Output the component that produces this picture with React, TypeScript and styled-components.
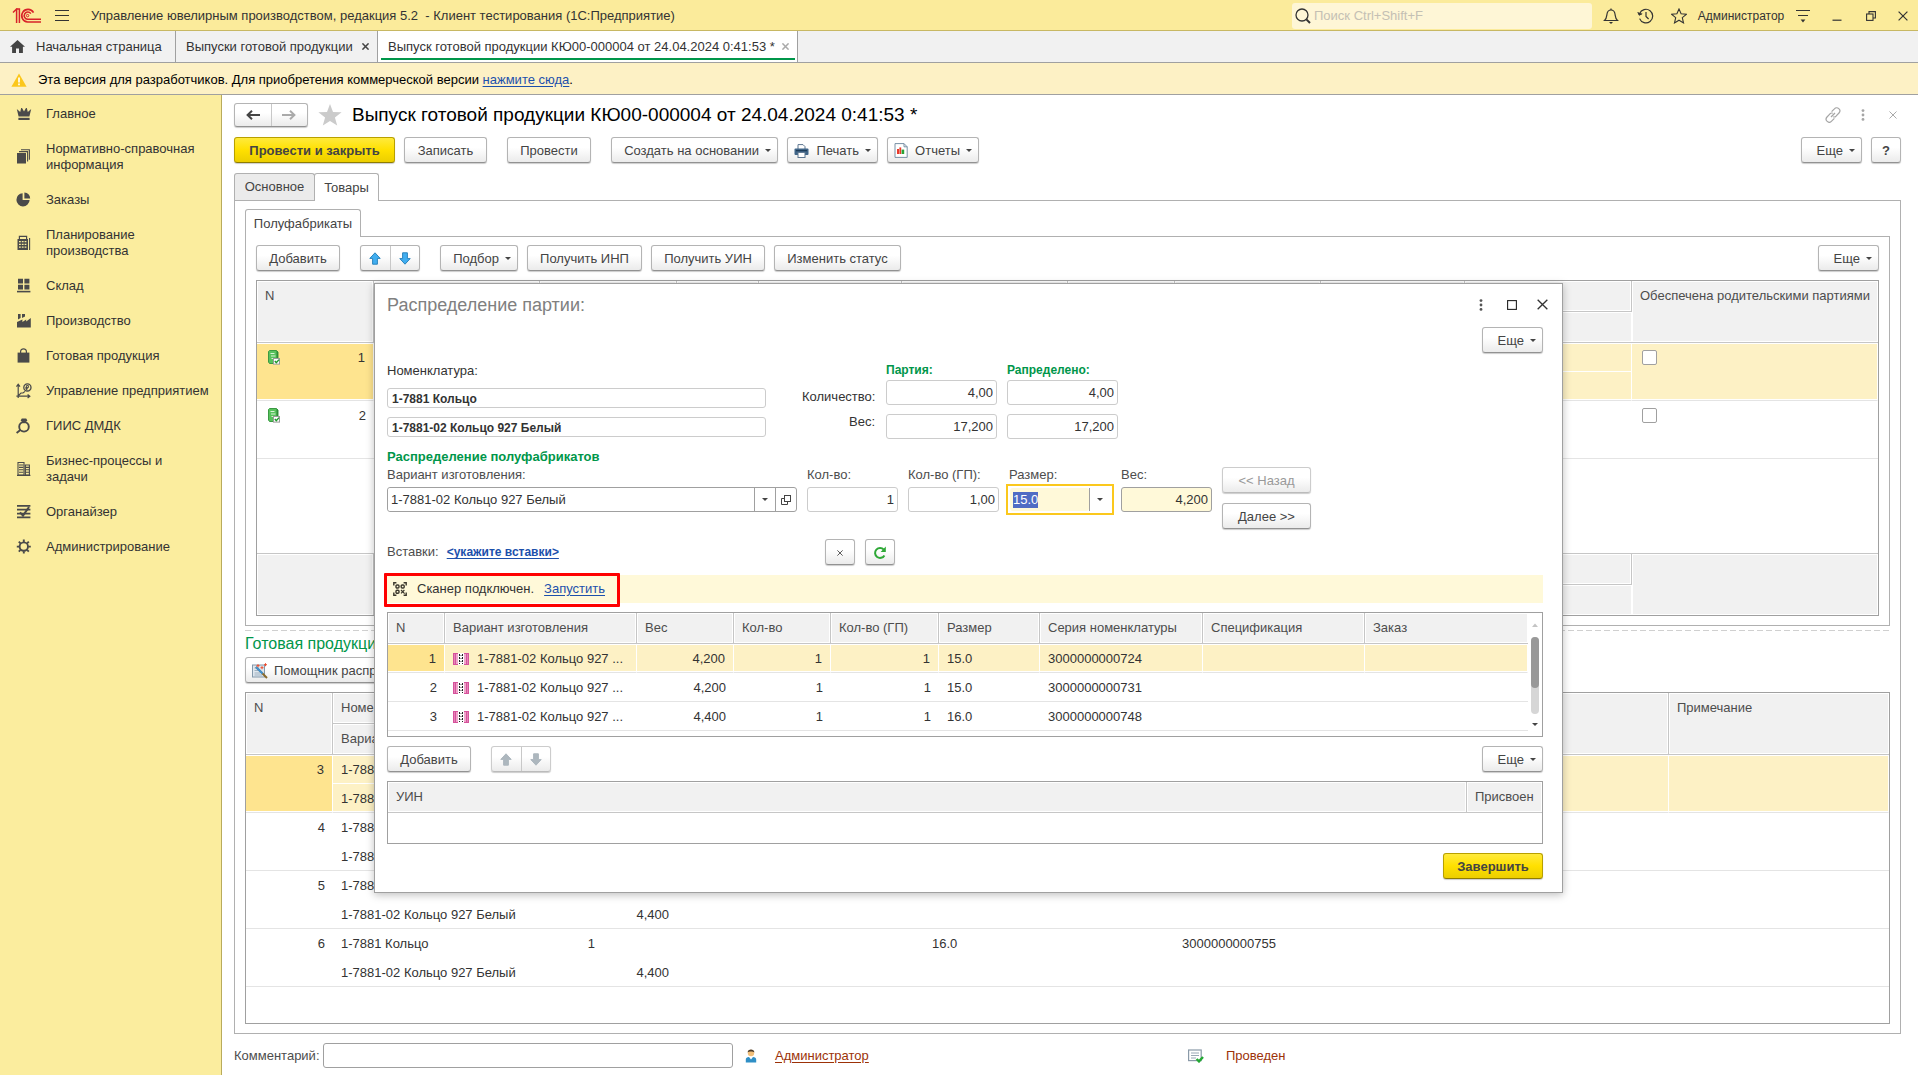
import React, { useEffect, useRef } from "react";
import styled, { createGlobalStyle, css } from "styled-components";

const GlobalStyle = createGlobalStyle`
  *, *::before, *::after { box-sizing: border-box; }
  body {
    margin: 0;
    background: #fff;
    color: #333;
    font-family: "Liberation Sans", Arial, sans-serif;
    font-size: 13px;
    line-height: 16px;
  }
  button, input { font-family: inherit; font-size: inherit; line-height: inherit; color: inherit; }
  button { cursor: pointer; }
  svg { display: block; flex: none; }
`;

/* ---------- Icons ---------- */

const LogoIcon = () => (
  <svg width="30" height="16" viewBox="0 0 30 16" fill="none" stroke="#d8232a">
    <path d="M1 4.5 L4.6 1 V15" strokeWidth="1.5" />
    <path d="M7.4 15 V1 H5" strokeWidth="1.5" />
    <path d="M21.5 4.6 A6.3 6.3 0 1 0 15.6 14 H29" strokeWidth="1.6" />
    <path d="M18.8 5.6 A3.6 3.6 0 1 0 15.6 11.2 H29" strokeWidth="1.5" />
    <circle cx="15.6" cy="7.6" r="1.2" strokeWidth="1" />
  </svg>
);

const BurgerIcon = () => (
  <svg width="14" height="12" viewBox="0 0 14 12" stroke="#333" strokeWidth="1">
    <path d="M0 0.5H14M0 5.5H14M0 10.5H14" />
  </svg>
);

const SearchIcon = () => (
  <svg width="16" height="16" viewBox="0 0 16 16" fill="none" stroke="#333" strokeWidth="1.3">
    <circle cx="7" cy="7" r="6" />
    <path d="M11.4 11.4 L15 15" strokeWidth="2" />
  </svg>
);

const BellIcon = () => (
  <svg width="16" height="16" viewBox="0 0 16 16" fill="none" stroke="#333" strokeWidth="1.2">
    <path d="M1.5 12.5 C3.6 10.8 3.6 8.5 4 6 C4.4 3.4 6 2 8 2 C10 2 11.6 3.4 12 6 C12.4 8.5 12.4 10.8 14.5 12.5 Z" />
    <path d="M8 0.5 V2" />
    <path d="M6 14 H10 L8 16 Z" fill="#333" stroke="none" />
  </svg>
);

const HistoryIcon = () => (
  <svg width="17" height="16" viewBox="0 0 17 16" fill="none" stroke="#333" strokeWidth="1.2">
    <path d="M2.6 5.6 A6.8 6.8 0 1 1 2.6 10.6" />
    <path d="M0.8 4.2 L2.2 7.2 L5.2 5.8" fill="#333" strokeWidth="1" />
    <path d="M9 4 V8.4 L11.6 11" />
  </svg>
);

const StarLineIcon = () => (
  <svg width="16" height="16" viewBox="0 0 16 16" fill="none" stroke="#333" strokeWidth="1.1">
    <path d="M8 1 L10.1 5.8 L15.3 6.3 L11.3 9.7 L12.5 14.9 L8 12.2 L3.5 14.9 L4.7 9.7 L0.7 6.3 L5.9 5.8 Z" />
  </svg>
);

const MenuDownIcon = () => (
  <svg width="14" height="14" viewBox="0 0 14 14" stroke="#333" strokeWidth="1.2">
    <path d="M0 1.5H14M2 6.5H12" />
    <path d="M4.6 10.5 H9.4 L7 13.4 Z" fill="#333" stroke="none" />
  </svg>
);

const MinimizeIcon = () => (
  <svg width="10" height="10" viewBox="0 0 10 10" stroke="#333">
    <path d="M0.5 9.2H9.5" strokeWidth="1.2" />
  </svg>
);

const RestoreIcon = () => (
  <svg width="10" height="10" viewBox="0 0 10 10" fill="none" stroke="#333" strokeWidth="1.1">
    <rect x="0.6" y="3" width="6.4" height="6.4" />
    <path d="M3 3 V0.6 H9.4 V7 H7" />
  </svg>
);

const CrossIcon = ({ size = 10, color = "#333", weight = 1.2 }: { size?: number; color?: string; weight?: number }) => (
  <svg width={size} height={size} viewBox="0 0 10 10" stroke={color} strokeWidth={weight}>
    <path d="M0.6 0.6 L9.4 9.4 M9.4 0.6 L0.6 9.4" />
  </svg>
);

const HomeIcon = () => (
  <svg width="15" height="13" viewBox="0 0 15 13" fill="#444">
    <path d="M7.5 0 L15 6.8 H12.9 V13 H9 V8.6 H6 V13 H2.1 V6.8 H0 Z" />
  </svg>
);

const WarningIcon = () => (
  <svg width="16" height="14" viewBox="0 0 16 14">
    <path d="M8 0.4 L15.6 13.8 H0.4 Z" fill="#fbc71c" />
    <path d="M8 4.4 V9.4 M8 10.6 V12.3" stroke="#fff" strokeWidth="1.7" />
  </svg>
);

const Arrow = ({ dir, color }: { dir: "left" | "right"; color: string }) => (
  <svg width="14" height="10" viewBox="0 0 14 10" fill="none" stroke={color} strokeWidth="2">
    {dir === "left" ? <path d="M14 5H2M6 0.8L1.6 5L6 9.2" /> : <path d="M0 5H12M8 0.8L12.4 5L8 9.2" />}
  </svg>
);

const BlockArrow = ({ dir, fill, line }: { dir: "up" | "down"; fill: string; line: string }) => (
  <svg width="12" height="13" viewBox="0 0 12 13" fill={fill} stroke={line} strokeWidth="1">
    {dir === "up" ? (
      <path d="M6 0.8 L11.2 6.4 H8.4 V12.2 H3.6 V6.4 H0.8 Z" />
    ) : (
      <path d="M6 12.2 L11.2 6.6 H8.4 V0.8 H3.6 V6.6 H0.8 Z" />
    )}
  </svg>
);

const FavoriteIcon = () => (
  <svg width="24" height="22" viewBox="0 0 24 22" fill="#cbcbcb">
    <path d="M12 0 L15 7.9 L23.6 8.3 L16.9 13.5 L19.2 21.6 L12 17 L4.8 21.6 L7.1 13.5 L0.4 8.3 L9 7.9 Z" />
  </svg>
);

const LinkIcon = () => (
  <svg width="16" height="16" viewBox="0 0 16 16" fill="none" stroke="#a5a5a5" strokeWidth="1.2">
    <path d="M6.6 4.6 L9.4 1.8 A2.9 2.9 0 0 1 14 6 L11 9.2 A2.7 2.7 0 0 1 8.2 9.8" />
    <path d="M9.4 11.4 L6.6 14.2 A2.9 2.9 0 0 1 2 10 L5 6.8 A2.7 2.7 0 0 1 7.8 6.2" />
    <path d="M6 10 L10 6" />
  </svg>
);

const KebabIcon = ({ color }: { color: string }) => (
  <svg width="4" height="12" viewBox="0 0 4 12" fill={color}>
    <circle cx="2" cy="1.6" r="1.4" />
    <circle cx="2" cy="6" r="1.4" />
    <circle cx="2" cy="10.4" r="1.4" />
  </svg>
);

const SquareIcon = () => (
  <svg width="10" height="10" viewBox="0 0 10 10" fill="none" stroke="#222" strokeWidth="1.1">
    <rect x="0.6" y="0.6" width="8.8" height="8.8" />
  </svg>
);

const Caret = ({ color = "#444" }: { color?: string }) => (
  <svg width="6" height="3" viewBox="0 0 6 3" fill={color}>
    <path d="M0 0H6L3 3Z" />
  </svg>
);

const PrinterIcon = () => (
  <svg width="15" height="14" viewBox="0 0 15 14">
    <path d="M4 5 V0.6 H9 L11 2.6 V5" fill="#fff" stroke="#5d7690" />
    <rect x="0.5" y="4.6" width="14" height="6.4" rx="1" fill="#3f6487" />
    <rect x="2" y="6.2" width="11" height="1" fill="#16344f" />
    <rect x="4" y="8.4" width="7" height="5.1" fill="#fff" stroke="#5d7690" />
  </svg>
);

const ReportIcon = () => (
  <svg width="14" height="15" viewBox="0 0 14 15">
    <path d="M1 0.6 H10 L13.2 3.8 V14.4 H1 Z" fill="#fff" stroke="#7890a5" />
    <path d="M10 0.6 V3.8 H13.2" fill="none" stroke="#7890a5" />
    <rect x="3" y="6" width="2" height="5" fill="#e83a2c" />
    <rect x="5.4" y="4.4" width="1.8" height="6.6" fill="#e83a2c" />
    <rect x="7.6" y="6.6" width="2.6" height="4.4" fill="#2aa336" />
  </svg>
);

const WizardIcon = () => (
  <svg width="16" height="16" viewBox="0 0 16 16">
    <rect x="0.5" y="2" width="12" height="12" fill="#dfe7ee" stroke="#8398aa" />
    <path d="M2.5 5H7M2.5 7.5H6M2.5 10H8M2.5 12H10" stroke="#9fb1c1" />
    <path d="M4 4 L15 15" stroke="#8a6a2b" strokeWidth="2" />
    <path d="M4 4 L10.5 10.5" stroke="#3f93d6" strokeWidth="2" />
    <path d="M6 1.2V4.2M4.5 2.7H7.5M10 3.2V6.2M8.5 4.7H11.5M13.5 0.2V3.2M12 1.7H15" stroke="#ef4a2c" />
  </svg>
);

const ItemIcon = () => (
  <svg width="13" height="15" viewBox="0 0 13 15">
    <path d="M1.5 0.5 H8.5 L10 2 V13.5 H1.5 L0.5 12 V1.5 Z" fill="#58c25d" stroke="#3b9a42" />
    <path d="M8.5 0.5 L10 2 V13.5 L8.5 12 Z" fill="#2f8a38" />
    <path d="M2.5 3.5 H6.5 M3 6 H7.5 M3.5 8.5 H6" stroke="#d8f4d5" />
    <rect x="5.5" y="8.5" width="6" height="5.6" fill="#fff" stroke="#9a9a9a" />
    <path d="M6.8 11 L8.3 12.6 L11 9.6" fill="none" stroke="#1d9a2b" strokeWidth="1.4" />
  </svg>
);

const RingIcon = () => (
  <svg width="16" height="12" viewBox="0 0 16 12">
    <rect width="16" height="12" fill="#d6529b" />
    <rect x="3" y="1" width="10" height="10" fill="#efa6cb" />
    <path d="M1.5 1.5V10.5M14.5 1.5V10.5" stroke="#f3b9d7" strokeDasharray="1 1" />
    <rect x="5" y="0" width="6" height="12" fill="#fff" />
    <path d="M6.5 1V11M9.5 1V11" stroke="#222" strokeDasharray="2 1" />
    <path d="M8 2V11" stroke="#444" strokeDasharray="1 2" />
  </svg>
);

const OpenIcon = () => (
  <svg width="10" height="10" viewBox="0 0 10 10" fill="none" stroke="#444">
    <rect x="3.5" y="0.5" width="6" height="6" />
    <path d="M3.5 3.5 H0.5 V9.5 H6.5 V6.5" />
  </svg>
);

const RefreshIcon = () => (
  <svg width="14" height="14" viewBox="0 0 14 14">
    <path d="M11.4 9.4 A5 5 0 1 1 10.8 3.6" fill="none" stroke="#2ea836" strokeWidth="2" />
    <path d="M12.8 0.6 V6 H7.6 Z" fill="#2ea836" />
  </svg>
);

const QrIcon = () => (
  <svg width="14" height="14" viewBox="0 0 14 14" fill="none" stroke="#3b372c" strokeWidth="1.4">
    <path d="M0.8 3.4V0.8H3.4M10.6 0.8H13.2V3.4M13.2 10.6V13.2H10.6M3.4 13.2H0.8V10.6" />
    <rect x="3" y="3" width="3" height="3" rx="1" />
    <rect x="8.2" y="3" width="3" height="3" rx="1" />
    <rect x="3" y="8.2" width="3" height="3" rx="1" />
    <path d="M8 8L11.6 11.6M11.4 8L8 11.4" strokeWidth="1.2" />
  </svg>
);

const PersonIcon = () => (
  <svg width="12" height="14" viewBox="0 0 12 14">
    <circle cx="6" cy="4" r="3.2" fill="#f2bf7a" />
    <path d="M2.6 3.6 C2.6 -0.6 9.4 -0.6 9.4 3.6 C8 2.2 4 2.2 2.6 3.6 Z" fill="#4a3b2a" />
    <path d="M0.8 13.6 V10.6 C0.8 9 2 8 4 8 L6 10.4 L8 8 C10 8 11.2 9 11.2 10.6 V13.6 Z" fill="#2f8fc6" />
  </svg>
);

const PostedIcon = () => (
  <svg width="16" height="14" viewBox="0 0 16 14">
    <rect x="0.6" y="1" width="12.6" height="10.6" fill="#fff" stroke="#8a9aa8" strokeWidth="1.2" />
    <path d="M3 4H11M3 6.5H11M3 9H8" stroke="#9aa8b5" strokeWidth="1.2" />
    <path d="M8.6 10 L11 12.4 L15 8" fill="none" stroke="#23a833" strokeWidth="2.4" />
  </svg>
);

const glyphs: Record<string, React.ReactNode> = {
  crown: (
    <>
      <path d="M0.8 3 L4.2 6 L5.2 2 H6 L8 5.4 L10 2 H10.8 L11.8 6 L15.2 3 L13.4 10.6 H2.6 Z" />
      <rect x="2.4" y="11.8" width="11.2" height="2.2" />
    </>
  ),
  books: (
    <>
      <rect x="1" y="4" width="9" height="10.5" />
      <path d="M3 2.6H11.6V12.6M5 0.8H13.4V10.8" fill="none" stroke="#4a4a4a" strokeWidth="1.1" />
    </>
  ),
  pie: (
    <>
      <path d="M6.6 1.2 V8 H13.6 A6.6 6.6 0 1 1 6.6 1.2 Z" />
      <path d="M8.4 0.6 A6.4 6.4 0 0 1 14.2 6.4 H8.4 Z" />
    </>
  ),
  calc: (
    <>
      <path d="M3.4 5V1.4H10.6V5" fill="none" stroke="#4a4a4a" strokeWidth="1.2" />
      <rect x="1.5" y="4" width="10.5" height="11" />
      <path d="M3 6.6H10.6M3 9.4H10.6M3 12.2H10.6" stroke="#fbed9e" strokeWidth="1.3" strokeDasharray="1.8 1" />
      <path d="M13.6 3V15" stroke="#4a4a4a" strokeWidth="1.1" />
    </>
  ),
  boxes: (
    <>
      <path d="M2 0.8H7V5.6H2ZM8.4 0.8H13.4V5.6H8.4ZM2 6.8H7V11.6H2ZM8.4 6.8H13.4V11.6H8.4Z" />
      <rect x="1" y="12.8" width="13.4" height="1.6" />
    </>
  ),
  factory: <path d="M1 14.5V9L6.4 6.4V9L10.2 6.4V8.4L14.8 5V14.5ZM2 1H4.6V5L2 6.4ZM6 1H9V3.4L6 5Z" />,
  bag: (
    <>
      <path d="M1.6 4.6H13.4V14.6H1.6Z" />
      <path d="M4.6 6.5V3.6C4.6 0 10.4 0 10.4 3.6V6.5" fill="none" stroke="#4a4a4a" strokeWidth="1.2" />
    </>
  ),
  chart: (
    <>
      <path d="M2.2 15V2M0.4 3.6L2.2 1.2L4 3.6M0.4 13.2H13.6M11.6 11.6L13.8 13.2L11.6 15M2.4 12.6L5 10H7L9 8.4" fill="none" stroke="#4a4a4a" strokeWidth="1.2" />
      <circle cx="11.4" cy="4.4" r="3.6" fill="none" stroke="#4a4a4a" strokeWidth="1.3" />
      <path d="M10.4 7V2.6H12.4V4.6H9.4M9.4 5.8H12" stroke="#4a4a4a" fill="none" strokeWidth="1" />
    </>
  ),
  ring: (
    <>
      <circle cx="8" cy="8.8" r="4.8" fill="none" stroke="#4a4a4a" strokeWidth="1.9" />
      <path d="M5.8 0.4H10.2L11.4 2.4L8 5.6L4.6 2.4Z" />
      <path d="M0.6 15L4.6 11.8" stroke="#4a4a4a" strokeWidth="1.9" />
    </>
  ),
  building: (
    <>
      <path d="M2 1.5H8V14H2ZM9.4 4H13.4V14H9.4Z" fill="none" stroke="#4a4a4a" strokeWidth="1.1" />
      <path d="M3 4H7.4M3 6.4H7.4M3 8.8H7.4M3 11.2H7.4M10 6.4H13M10 8.8H13M10 11.2H13" stroke="#4a4a4a" strokeWidth="1.1" />
      <path d="M1 14.4H14.4" stroke="#4a4a4a" strokeWidth="1.2" />
    </>
  ),
  organizer: (
    <>
      <path d="M1 1.8H14.4M1 5.6H14.4M1 9.6H14.4M1 13.4H14.4" stroke="#4a4a4a" strokeWidth="1.7" />
      <path d="M4 8.4L7 11.6L13 3" fill="none" stroke="#4a4a4a" strokeWidth="2" />
    </>
  ),
  gear: (
    <>
      <circle cx="7.8" cy="7.6" r="4.2" fill="none" stroke="#4a4a4a" strokeWidth="1.9" />
      <path d="M7.8 0.6V3M7.8 12.2V14.6M0.8 7.6H3.2M12.4 7.6H14.8M2.8 2.6L4.5 4.3M11.1 10.9L12.8 12.6M12.8 2.6L11.1 4.3M4.5 10.9L2.8 12.6" stroke="#4a4a4a" strokeWidth="1.9" />
    </>
  ),
};

const SideIcon = ({ name }: { name: string }) => (
  <svg width="16" height="16" viewBox="0 0 16 16" fill="#4a4a4a">
    {glyphs[name]}
  </svg>
);

/* ---------- Shell ---------- */

const Page = styled.div`
  min-height: 100vh;
  display: flex;
  flex-direction: column;
  position: relative;
`;

const TopBar = styled.header`
  height: 31px;
  display: flex;
  align-items: center;
  padding: 1px 0 0 12px;
  background: #fbeb9b;
  border-bottom: 1px solid #c8b863;
`;

const AppTitle = styled.div`
  margin-left: 9px;
  flex: 1;
  white-space: pre;
`;

const BarButton = styled.button<{ $w?: number }>`
  width: ${(p) => p.$w ?? 34}px;
  height: 24px;
  padding: 0;
  border: 0;
  background: none;
  display: flex;
  align-items: center;
  justify-content: center;
`;

const SearchBox = styled.label`
  width: 300px;
  height: 26px;
  margin-right: 2px;
  padding-left: 3px;
  display: flex;
  align-items: center;
  gap: 3px;
  border-radius: 3px;
  background: #fef6d6;
`;

const SearchInput = styled.input`
  flex: 1;
  min-width: 0;
  border: 0;
  padding: 0;
  background: none;
  outline: none;
  &::placeholder { color: #c4c0b4; opacity: 1; }
`;

const UserName = styled.span`
  font-size: 12px;
  width: 90px;
  text-align: center;
`;

const TabStrip = styled.nav`
  height: 32px;
  display: flex;
  background: #f1f1f1;
  border-bottom: 1px solid #a0a0a0;
`;

const AppTab = styled.div<{ $active?: boolean; $w: number }>`
  width: ${(p) => p.$w}px;
  padding: 0 8px 0 10px;
  display: flex;
  align-items: center;
  border-right: 1px solid #a0a0a0;
  white-space: nowrap;
  ${(p) =>
    p.$active &&
    css`
      background: linear-gradient(#00964a, #00964a) 3px 27px / calc(100% - 5px) 2px no-repeat #fff;
    `}
`;

const TabLabel = styled.button`
  flex: 1;
  display: flex;
  align-items: center;
  gap: 11px;
  padding: 0;
  border: 0;
  background: none;
  white-space: nowrap;
`;

const TabClose = styled.button`
  padding: 0;
  border: 0;
  background: none;
`;

const Banner = styled.div`
  height: 32px;
  display: flex;
  align-items: center;
  gap: 11px;
  padding: 2px 0 0 11px;
  background: #fdf1c5;
  border-bottom: 1px solid #a0a0a0;
  color: #000;
`;

const Link = styled.a<{ $strong?: boolean; $brown?: boolean }>`
  color: ${(p) => (p.$brown ? "#9c3208" : "#1c50ac")};
  font-weight: ${(p) => (p.$strong ? "bold" : "normal")};
  font-size: ${(p) => (p.$strong ? 12 : 13)}px;
  text-decoration: underline;
  text-underline-offset: 2px;
`;

const Main = styled.div`
  flex: 1;
  display: flex;
`;

const Sidebar = styled.nav`
  width: 222px;
  flex: none;
  padding-top: 1px;
  background: #fbed9e;
  border-right: 1px solid #b9ab5c;
`;

const SideItem = styled.a`
  display: flex;
  align-items: center;
  gap: 14px;
  min-height: 35px;
  padding: 10px 8px 9px 16px;
  color: #333;
  text-decoration: none;
  white-space: pre-line;
`;

const Work = styled.main`
  flex: 1;
  min-width: 0;
  display: flex;
  flex-direction: column;
  padding: 8px 17px 7px 12px;
`;

/* ---------- Controls ---------- */

const Row = styled.div<{ $gap?: number; $mt?: number }>`
  display: flex;
  align-items: center;
  gap: ${(p) => p.$gap ?? 9}px;
  margin-top: ${(p) => p.$mt ?? 0}px;
`;

const Spacer = styled.div<{ $w?: number }>`
  ${(p) => (p.$w ? `width: ${p.$w}px;` : "flex: 1;")}
`;

const Button = styled.button<{ $w: number; $primary?: boolean; $left?: boolean }>`
  width: ${(p) => p.$w}px;
  height: 26px;
  flex: none;
  display: flex;
  align-items: center;
  justify-content: ${(p) => (p.$left ? "flex-start" : "center")};
  gap: 6px;
  padding: 1px 6px 0;
  border: 1px solid #b4b4b4;
  border-bottom-color: #929292;
  border-radius: 3px;
  background: linear-gradient(#fff 40%, #ebebeb);
  box-shadow: 0 1px 1px rgba(0, 0, 0, 0.2);
  color: #444;
  white-space: nowrap;
  ${(p) =>
    p.$primary &&
    css`
      border-color: #b8a000;
      border-bottom-color: #8f7c00;
      background: linear-gradient(#ffea3c, #ffe000 50%, #ecce00);
      font-weight: bold;
    `}
  &:disabled {
    color: #999;
    border-color: #ccc;
    border-bottom-color: #bbb;
    cursor: default;
  }
`;

const DropLabel = styled.span`
  flex: 1;
  text-align: right;
`;

const ButtonGroup = styled.div<{ $w: number; $muted?: boolean; $h?: number }>`
  width: ${(p) => p.$w}px;
  height: ${(p) => p.$h ?? 26}px;
  display: flex;
  border: 1px solid ${(p) => (p.$muted ? "#ccc" : "#b4b4b4")};
  border-bottom-color: ${(p) => (p.$muted ? "#bbb" : "#929292")};
  border-radius: 3px;
  background: linear-gradient(#fff 40%, #ebebeb);
  box-shadow: 0 1px 1px rgba(0, 0, 0, 0.2);
`;

const GroupButton = styled.button`
  flex: 1;
  padding: 0;
  border: 0;
  background: none;
  display: flex;
  align-items: center;
  justify-content: center;
  & + & { border-left: 1px solid #c8c8c8; }
`;

const FormTitle = styled.h1`
  margin: 0;
  flex: 1;
  font-size: 19px;
  line-height: 24px;
  font-weight: normal;
  color: #000;
`;

const Tabs = styled.div<{ $mt?: number }>`
  display: flex;
  height: 27px;
  margin-top: ${(p) => p.$mt ?? 0}px;
`;

const Tab = styled.button<{ $w: number; $active?: boolean }>`
  width: ${(p) => p.$w}px;
  height: ${(p) => (p.$active ? 28 : 27)}px;
  padding: 0;
  position: relative;
  border: 1px solid #b0b0b0;
  border-bottom: 0;
  border-radius: 3px 3px 0 0;
  background: ${(p) => (p.$active ? "#fff" : "#ebebeb")};
  color: #444;
  & + & { margin-left: -1px; }
`;

const Panel = styled.section<{ $grow?: boolean }>`
  ${(p) => p.$grow && "flex: 1;"}
  display: flex;
  flex-direction: column;
  padding: 8px 10px 9px;
  border: 1px solid #b0b0b0;
`;

const Splitter = styled.div`
  height: 1px;
  margin-top: 4px;
  background: repeating-linear-gradient(90deg, #d0d0d0 0 6px, transparent 6px 9px);
`;

const SectionTitle = styled.h2`
  margin: 0;
  font-size: 16px;
  line-height: 26px;
  font-weight: normal;
  color: #00964a;
`;

/* ---------- Tables ---------- */

const TableBox = styled.div<{ $h?: number }>`
  display: flex;
  margin-top: 9px;
  ${(p) => (p.$h ? `height: ${p.$h}px;` : "flex: 1 0 auto;")}
  border: 1px solid #a0a0a0;
  overflow: hidden;
  align-items: flex-start;
`;

const Grid = styled.table<{ $fill?: boolean }>`
  flex: 1;
  width: 100%;
  ${(p) => p.$fill && "height: 100%;"}
  table-layout: fixed;
  border-collapse: separate;
  border-spacing: 0;
`;

const Th = styled.th`
  height: 31px;
  padding: 0 8px;
  text-align: left;
  vertical-align: top;
  font-weight: normal;
  line-height: 30px;
  color: #4d4d4d;
  white-space: nowrap;
  overflow: hidden;
  background: #f1f1f1;
  border-right: 1px solid #c6c6c6;
  border-bottom: 1px solid #c6c6c6;
  box-shadow: inset 0 0 0 1px #fff;
  &:last-child { border-right: 0; }
`;

const Tf = styled.td`
  height: 31px;
  background: #f1f1f1;
  border-right: 1px solid #c6c6c6;
  border-top: 1px solid #c6c6c6;
  box-shadow: inset 0 0 0 1px #fff;
  &:last-child { border-right: 0; }
`;

const edges = {
  full: "inset 0 1px 0 #fff, inset 0 -1px 0 #fff",
  top: "inset 0 1px 0 #fff",
  bottom: "inset 0 -1px 0 #fff",
};

const Td = styled.td<{ $num?: boolean; $sel?: boolean; $key?: boolean; $part?: "top" | "bottom" }>`
  height: 29px;
  padding: 1px 8px 0;
  vertical-align: top;
  line-height: 27px;
  text-align: ${(p) => (p.$num ? "right" : "left")};
  white-space: nowrap;
  overflow: hidden;
  border-bottom: 1px solid ${(p) => (p.$part === "top" ? "#fff" : "#e4e4e4")};
  ${(p) =>
    p.$sel &&
    css`
      background: ${p.$key ? "#fee48f" : "#fdf1c5"};
      border-right: 1px solid #fff;
      box-shadow: ${edges[p.$part ?? "full"]};
    `}
`;

const FillCell = styled.td`
  padding: 0;
`;

const CellFlex = styled.div`
  display: flex;
  align-items: center;
  justify-content: space-between;
  height: 27px;
  padding-left: 3px;
`;

const Named = styled.div`
  display: flex;
  align-items: center;
  gap: 8px;
  height: 27px;
`;

const CheckBox = styled.input`
  appearance: none;
  display: block;
  width: 15px;
  height: 15px;
  margin: 6px 0 0 2px;
  border: 1px solid #a0a0a0;
  border-radius: 2px;
  background: #fff;
`;

const ScrollRail = styled.div`
  width: 14px;
  height: 100%;
  flex: none;
  display: flex;
  flex-direction: column;
  align-items: center;
  justify-content: space-between;
  padding: 10px 0;
`;

const ScrollTrack = styled.div`
  width: 8px;
  height: 77px;
  border-radius: 4px;
  background: #d6d6d6;
`;

const ScrollThumb = styled.div`
  height: 51px;
  border-radius: 4px;
  background: #999;
`;

/* ---------- Dialog ---------- */

const Dialog = styled.section`
  position: absolute;
  top: 283px;
  left: 374px;
  right: 355px;
  padding: 0 19px 13px 12px;
  background: #fff;
  border: 1px solid #a0a0a0;
  box-shadow: 0 2px 8px rgba(0, 0, 0, 0.25);
`;

const DialogHead = styled.div`
  height: 43px;
  margin-right: -15px;
  padding-bottom: 2px;
  display: flex;
  align-items: center;
`;

const DialogTitle = styled.h2`
  margin: 0;
  flex: 1;
  font-size: 18px;
  font-weight: normal;
  color: #808080;
`;

const End = styled.div<{ $mt?: number }>`
  display: flex;
  justify-content: flex-end;
  margin-top: ${(p) => p.$mt ?? 0}px;
`;

const Columns = styled.div<{ $mt: number }>`
  display: flex;
  align-items: flex-start;
  gap: 10px;
  margin-top: ${(p) => p.$mt}px;
`;

const NameColumn = styled.div`
  width: 379px;
  margin-right: 26px;
  padding-top: 1px;
  display: flex;
  flex-direction: column;
  gap: 9px;
`;

const NameInput = styled.input`
  width: 100%;
  height: 20px;
  padding: 1px 4px 0;
  border: 1px solid #ccc;
  border-radius: 3px;
  font-size: 12px;
  font-weight: bold;
`;

const SideLabels = styled.div`
  width: 73px;
  margin-right: 1px;
  padding-top: 22px;
  text-align: right;
  line-height: 25px;
`;

const Totals = styled.div`
  width: 111px;
  display: flex;
  flex-direction: column;
`;

const GreenLabel = styled.div<{ $size?: number; $mt?: number }>`
  margin-top: ${(p) => p.$mt ?? 0}px;
  font-size: ${(p) => p.$size ?? 12}px;
  font-weight: bold;
  color: #00964a;
  & + input { margin-top: 2px; }
`;

const NumberInput = styled.input<{ $hot?: boolean }>`
  width: 100%;
  height: 25px;
  padding: 0 3px;
  text-align: right;
  border: 1px solid ${(p) => (p.$hot ? "#a0a0a0" : "#ccc")};
  border-radius: 3px;
  background: ${(p) => (p.$hot ? "#fff9d9" : "#fff")};
  & + & { margin-top: 9px; }
`;

const Field = styled.div<{ $w: number }>`
  width: ${(p) => p.$w}px;
  display: flex;
  flex-direction: column;
  gap: 4px;
`;

const FieldLabel = styled.label`
  color: #4d4d4d;
  white-space: nowrap;
`;

const Combo = styled.div<{ $focus?: boolean }>`
  height: 25px;
  display: flex;
  border: 1px solid #a0a0a0;
  border-radius: 3px;
  ${(p) =>
    p.$focus &&
    css`
      border-color: #fff;
      box-shadow: 0 0 0 1px #fff, 0 0 0 3px #fbc81d;
      border-radius: 0;
    `}
`;

const ComboInput = styled.input<{ $hot?: boolean }>`
  flex: 1;
  min-width: 0;
  padding: 0 3px;
  border: 0;
  border-radius: 3px;
  outline: none;
  background: ${(p) => (p.$hot ? "#fff9d9" : "#fff")};
  &::selection { background: #506cc4; color: #fff; }
`;

const ComboButton = styled.button`
  width: 21px;
  padding: 0;
  border: 0;
  border-left: 1px solid #a0a0a0;
  background: none;
  display: flex;
  align-items: center;
  justify-content: center;
`;

const Stack = styled.div`
  display: flex;
  flex-direction: column;
  gap: 10px;
`;

const InsertCell = styled.div`
  width: 428px;
  display: flex;
  gap: 8px;
`;

const ScannerBar = styled.div`
  position: relative;
  height: 28px;
  margin-top: 10px;
  padding-left: 6px;
  display: flex;
  align-items: center;
  gap: 10px;
  background: #fff9d9;
`;

const RedFrame = styled.div`
  position: absolute;
  left: -3px;
  top: -2px;
  width: 236px;
  height: 34px;
  border: 3px solid #fe0000;
  border-radius: 1px;
  pointer-events: none;
`;

const Footer = styled.footer`
  display: flex;
  align-items: center;
  margin-top: 9px;
`;

const CommentInput = styled.input`
  width: 410px;
  height: 25px;
  margin: 0 12px 0 7px;
  border: 1px solid #a0a0a0;
  border-radius: 3px;
`;

const FooterLabel = styled.label`
  width: 82px;
  color: #4d4d4d;
  white-space: nowrap;
`;

const Author = styled.div`
  width: 443px;
  display: flex;
  align-items: center;
  gap: 18px;
`;

const Posted = styled.div`
  display: flex;
  align-items: center;
  gap: 22px;
  color: #9c3208;
`;

/* ---------- Data ---------- */

const sections: [string, string][] = [
  ["crown", "Главное"],
  ["books", "Нормативно-справочная информация"],
  ["pie", "Заказы"],
  ["calc", "Планирование производства"],
  ["boxes", "Склад"],
  ["factory", "Производство"],
  ["bag", "Готовая продукция"],
  ["chart", "Управление предприятием"],
  ["ring", "ГИИС ДМДК"],
  ["building", "Бизнес-процессы и\nзадачи"],
  ["organizer", "Органайзер"],
  ["gear", "Администрирование"],
];

const semiColumns = [166, 137, 82, 143, 166, 107, 146, 144, 167];

const parts = [
  { n: 1, weight: "4,200", size: "15.0", series: "3000000000724" },
  { n: 2, weight: "4,200", size: "15.0", series: "3000000000731" },
  { n: 3, weight: "4,400", size: "16.0", series: "3000000000748" },
];

const products = [
  { n: 3, weight: "4,200", size: "15.0", series: "3000000000724" },
  { n: 4, weight: "4,200", size: "15.0", series: "3000000000731" },
  { n: 5, weight: "4,400", size: "16.0", series: "3000000000748" },
  { n: 6, weight: "4,400", size: "16.0", series: "3000000000755" },
];

const MoreButton = () => (
  <Button $w={61}>
    <DropLabel>Еще</DropLabel>
    <Caret />
  </Button>
);

const SemiTable = () => (
  <TableBox $h={336}>
    <Grid $fill>
      <colgroup>
        <col style={{ width: 117 }} />
        {semiColumns.map((w, i) => (
          <col key={i} style={{ width: w }} />
        ))}
        <col />
      </colgroup>
      <thead>
        <tr>
          <Th rowSpan={2}>N</Th>
          {semiColumns.map((_, i) => (
            <Th key={i} />
          ))}
          <Th rowSpan={2}>Обеспечена родительскими партиями</Th>
        </tr>
        <tr>
          {semiColumns.map((_, i) => (
            <Th key={i} />
          ))}
        </tr>
      </thead>
      <tbody>
        {[1, 2].map((n) => (
          <React.Fragment key={n}>
            <tr>
              <Td rowSpan={2} $sel={n === 1} $key>
                <CellFlex>
                  <ItemIcon />
                  <span>{n}</span>
                </CellFlex>
              </Td>
              {semiColumns.map((_, i) => (
                <Td key={i} $sel={n === 1} $part="top" />
              ))}
              <Td rowSpan={2} $sel={n === 1}>
                <CheckBox type="checkbox" aria-label="Обеспечена родительскими партиями" />
              </Td>
            </tr>
            <tr>
              {semiColumns.map((_, i) => (
                <Td key={i} $sel={n === 1} $part="bottom" />
              ))}
            </tr>
          </React.Fragment>
        ))}
        <tr>
          <FillCell colSpan={11} />
        </tr>
      </tbody>
      <tfoot>
        <tr>
          <Tf rowSpan={2} />
          {semiColumns.map((_, i) => (
            <Tf key={i} />
          ))}
          <Tf rowSpan={2} />
        </tr>
        <tr>
          {semiColumns.map((_, i) => (
            <Tf key={i} />
          ))}
        </tr>
      </tfoot>
    </Grid>
  </TableBox>
);

const ProductTable = () => (
  <TableBox>
    <Grid>
      <colgroup>
        {[87, 246, 24, 74, 247, 250, 495].map((w, i) => (
          <col key={i} style={{ width: w }} />
        ))}
        <col />
      </colgroup>
      <thead>
        <tr>
          <Th rowSpan={2}>N</Th>
          <Th>Номенклатура</Th>
          <Th colSpan={2} />
          <Th rowSpan={2} />
          <Th rowSpan={2} />
          <Th rowSpan={2} />
          <Th rowSpan={2}>Примечание</Th>
        </tr>
        <tr>
          <Th>Вариант</Th>
          <Th colSpan={2} />
        </tr>
      </thead>
      <tbody>
        {products.map((p, i) => (
          <React.Fragment key={p.n}>
            <tr>
              <Td rowSpan={2} $num $sel={i === 0} $key>{p.n}</Td>
              <Td $sel={i === 0} $part="top">1-7881 Кольцо</Td>
              <Td $sel={i === 0} $part="top" $num>1</Td>
              <Td $sel={i === 0} $part="top" />
              <Td rowSpan={2} $sel={i === 0} />
              <Td rowSpan={2} $sel={i === 0}>{p.size}</Td>
              <Td rowSpan={2} $sel={i === 0}>{p.series}</Td>
              <Td rowSpan={2} $sel={i === 0} />
            </tr>
            <tr>
              <Td $sel={i === 0} $part="bottom">1-7881-02 Кольцо 927 Белый</Td>
              <Td colSpan={2} $sel={i === 0} $part="bottom" $num>{p.weight}</Td>
            </tr>
          </React.Fragment>
        ))}
      </tbody>
    </Grid>
  </TableBox>
);

const BatchDialog = () => {
  const sizeRef = useRef<HTMLInputElement>(null);
  useEffect(() => {
    sizeRef.current?.focus({ preventScroll: true });
    sizeRef.current?.select();
  }, []);

  return (
    <Dialog role="dialog" aria-label="Распределение партии">
      <DialogHead>
        <DialogTitle>Распределение партии:</DialogTitle>
        <BarButton $w={31} aria-label="Меню"><KebabIcon color="#555" /></BarButton>
        <BarButton $w={31} aria-label="Развернуть"><SquareIcon /></BarButton>
        <BarButton $w={31} aria-label="Закрыть"><CrossIcon size={11} /></BarButton>
      </DialogHead>
      <End><MoreButton /></End>

      <Columns $mt={9}>
        <NameColumn>
          <label htmlFor="item">Номенклатура:</label>
          <NameInput id="item" readOnly value="1-7881 Кольцо" />
          <NameInput readOnly aria-label="Вариант" value="1-7881-02 Кольцо 927 Белый" />
        </NameColumn>
        <SideLabels>
          <div>Количество:</div>
          <div>Вес:</div>
        </SideLabels>
        <Totals>
          <GreenLabel>Партия:</GreenLabel>
          <NumberInput readOnly aria-label="Партия, количество" value="4,00" />
          <NumberInput readOnly aria-label="Партия, вес" value="17,200" />
        </Totals>
        <Totals>
          <GreenLabel>Рапределено:</GreenLabel>
          <NumberInput readOnly aria-label="Распределено, количество" value="4,00" />
          <NumberInput readOnly aria-label="Распределено, вес" value="17,200" />
        </Totals>
      </Columns>

      <GreenLabel $size={13} $mt={10}>Распределение полуфабрикатов</GreenLabel>

      <Columns $mt={2}>
        <Field $w={410}>
          <FieldLabel htmlFor="variant">Вариант изготовления:</FieldLabel>
          <Combo>
            <ComboInput id="variant" defaultValue="1-7881-02 Кольцо 927 Белый" />
            <ComboButton aria-label="Выбрать"><Caret /></ComboButton>
            <ComboButton aria-label="Открыть"><OpenIcon /></ComboButton>
          </Combo>
        </Field>
        <Field $w={91}>
          <FieldLabel htmlFor="qty">Кол-во:</FieldLabel>
          <NumberInput id="qty" defaultValue="1" />
        </Field>
        <Field $w={91}>
          <FieldLabel htmlFor="qtyGp">Кол-во (ГП):</FieldLabel>
          <NumberInput id="qtyGp" defaultValue="1,00" />
        </Field>
        <Field $w={102}>
          <FieldLabel htmlFor="size">Размер:</FieldLabel>
          <Combo $focus>
            <ComboInput id="size" ref={sizeRef} $hot defaultValue="15.0" />
            <ComboButton aria-label="Выбрать размер"><Caret /></ComboButton>
          </Combo>
        </Field>
        <Field $w={91}>
          <FieldLabel htmlFor="weight">Вес:</FieldLabel>
          <NumberInput id="weight" $hot defaultValue="4,200" />
        </Field>
        <Stack>
          <Button $w={89} disabled>&lt;&lt; Назад</Button>
          <Button $w={89}>Далее &gt;&gt;</Button>
        </Stack>
      </Columns>

      <Row $gap={10} $mt={10}>
        <InsertCell>
          <FieldLabel as="span">Вставки:</FieldLabel>
          <Link href="#" $strong>&lt;укажите вставки&gt;</Link>
        </InsertCell>
        <Button $w={30} aria-label="Очистить"><CrossIcon size={6} color="#555" weight={1.6} /></Button>
        <Button $w={30} aria-label="Обновить"><RefreshIcon /></Button>
      </Row>

      <ScannerBar>
        <QrIcon />
        <span>Сканер подключен.</span>
        <Link href="#">Запустить</Link>
        <RedFrame />
      </ScannerBar>

      <TableBox $h={125}>
        <Grid>
          <colgroup>
            {[57, 192, 97, 97, 108, 101, 163, 162].map((w, i) => (
              <col key={i} style={{ width: w }} />
            ))}
            <col />
          </colgroup>
          <thead>
            <tr>
              <Th>N</Th>
              <Th>Вариант изготовления</Th>
              <Th>Вес</Th>
              <Th>Кол-во</Th>
              <Th>Кол-во (ГП)</Th>
              <Th>Размер</Th>
              <Th>Серия номенклатуры</Th>
              <Th>Спецификация</Th>
              <Th>Заказ</Th>
            </tr>
          </thead>
          <tbody>
            {parts.map((p, i) => (
              <tr key={p.n}>
                <Td $num $sel={i === 0} $key>{p.n}</Td>
                <Td $sel={i === 0}>
                  <Named><RingIcon />1-7881-02 Кольцо 927 ...</Named>
                </Td>
                <Td $num $sel={i === 0}>{p.weight}</Td>
                <Td $num $sel={i === 0}>1</Td>
                <Td $num $sel={i === 0}>1</Td>
                <Td $sel={i === 0}>{p.size}</Td>
                <Td $sel={i === 0}>{p.series}</Td>
                <Td $sel={i === 0} />
                <Td $sel={i === 0} />
              </tr>
            ))}
          </tbody>
        </Grid>
        <ScrollRail>
          <svg width="6" height="4" viewBox="0 0 6 4" fill="#c4c4c4"><path d="M0 4H6L3 0.4Z" /></svg>
          <ScrollTrack><ScrollThumb /></ScrollTrack>
          <Caret />
        </ScrollRail>
      </TableBox>

      <Row $mt={9}>
        <Button $w={84}>Добавить</Button>
        <Spacer $w={2} />
        <ButtonGroup $w={60} $muted>
          <GroupButton aria-label="Вверх" disabled><BlockArrow dir="up" fill="#adb7be" line="#adb7be" /></GroupButton>
          <GroupButton aria-label="Вниз" disabled><BlockArrow dir="down" fill="#adb7be" line="#adb7be" /></GroupButton>
        </ButtonGroup>
        <Spacer />
        <MoreButton />
      </Row>

      <TableBox $h={63}>
        <Grid>
          <colgroup>
            <col />
            <col style={{ width: 75 }} />
          </colgroup>
          <thead>
            <tr>
              <Th>УИН</Th>
              <Th>Присвоен</Th>
            </tr>
          </thead>
        </Grid>
      </TableBox>

      <End $mt={9}>
        <Button $w={100} $primary>Завершить</Button>
      </End>
    </Dialog>
  );
};

export default function App() {
  return (
    <Page>
      <GlobalStyle />
      <TopBar>
        <LogoIcon />
        <BarButton $w={40} aria-label="Меню"><BurgerIcon /></BarButton>
        <AppTitle>{"Управление ювелирным производством, редакция 5.2  - Клиент тестирования (1С:Предприятие)"}</AppTitle>
        <SearchBox>
          <SearchIcon />
          <SearchInput aria-label="Поиск" placeholder="Поиск Ctrl+Shift+F" />
        </SearchBox>
        <BarButton aria-label="Оповещения"><BellIcon /></BarButton>
        <BarButton aria-label="История"><HistoryIcon /></BarButton>
        <BarButton aria-label="Избранное"><StarLineIcon /></BarButton>
        <UserName>Администратор</UserName>
        <BarButton aria-label="Настройки"><MenuDownIcon /></BarButton>
        <BarButton aria-label="Свернуть"><MinimizeIcon /></BarButton>
        <BarButton aria-label="Восстановить"><RestoreIcon /></BarButton>
        <BarButton $w={30} aria-label="Закрыть окно"><CrossIcon /></BarButton>
      </TopBar>

      <TabStrip>
        <AppTab $w={176}>
          <TabLabel><HomeIcon />Начальная страница</TabLabel>
        </AppTab>
        <AppTab $w={202}>
          <TabLabel>Выпуски готовой продукции</TabLabel>
          <TabClose aria-label="Закрыть вкладку"><CrossIcon size={7} color="#444" weight={2.2} /></TabClose>
        </AppTab>
        <AppTab $w={420} $active>
          <TabLabel>Выпуск готовой продукции КЮ00-000004 от 24.04.2024 0:41:53 *</TabLabel>
          <TabClose aria-label="Закрыть вкладку"><CrossIcon size={7} color="#aaa" weight={2.2} /></TabClose>
        </AppTab>
      </TabStrip>

      <Banner>
        <WarningIcon />
        <span>
          Эта версия для разработчиков. Для приобретения коммерческой версии <Link href="#">нажмите сюда</Link>.
        </span>
      </Banner>

      <Main>
        <Sidebar>
          {sections.map(([icon, label]) => (
            <SideItem key={icon} href="#">
              <SideIcon name={icon} />
              <span>{label}</span>
            </SideItem>
          ))}
        </Sidebar>

        <Work>
          <Row $gap={10}>
            <ButtonGroup $w={74} $h={24}>
              <GroupButton aria-label="Назад"><Arrow dir="left" color="#444" /></GroupButton>
              <GroupButton aria-label="Вперед"><Arrow dir="right" color="#aaa" /></GroupButton>
            </ButtonGroup>
            <FavoriteIcon />
            <FormTitle>Выпуск готовой продукции КЮ00-000004 от 24.04.2024 0:41:53 *</FormTitle>
            <Row $gap={14}>
              <BarButton $w={16} aria-label="Ссылка"><LinkIcon /></BarButton>
              <BarButton $w={16} aria-label="Еще"><KebabIcon color="#a5a5a5" /></BarButton>
              <BarButton $w={16} aria-label="Закрыть"><CrossIcon size={8} color="#a5a5a5" /></BarButton>
            </Row>
          </Row>

          <Row $mt={10}>
            <Button $w={161} $primary>Провести и закрыть</Button>
            <Button $w={83}>Записать</Button>
            <Spacer $w={2} />
            <Button $w={84}>Провести</Button>
            <Spacer $w={2} />
            <Button $w={167}><DropLabel>Создать на основании</DropLabel><Caret /></Button>
            <Button $w={91}><PrinterIcon /><DropLabel>Печать</DropLabel><Caret /></Button>
            <Button $w={92}><ReportIcon /><DropLabel>Отчеты</DropLabel><Caret /></Button>
            <Spacer />
            <MoreButton />
            <Button $w={30}><b>?</b></Button>
          </Row>

          <Tabs $mt={10}>
            <Tab $w={81}>Основное</Tab>
            <Tab $w={65} $active>Товары</Tab>
          </Tabs>
          <Panel $grow>
            <Tabs>
              <Tab $w={116} $active>Полуфабрикаты</Tab>
            </Tabs>
            <Panel>
              <Row>
                <Button $w={84}>Добавить</Button>
                <Spacer $w={2} />
                <ButtonGroup $w={60}>
                  <GroupButton aria-label="Вверх"><BlockArrow dir="up" fill="#41aef0" line="#2b84bd" /></GroupButton>
                  <GroupButton aria-label="Вниз"><BlockArrow dir="down" fill="#41aef0" line="#2b84bd" /></GroupButton>
                </ButtonGroup>
                <Spacer $w={2} />
                <Button $w={78}><DropLabel>Подбор</DropLabel><Caret /></Button>
                <Button $w={115}>Получить ИНП</Button>
                <Button $w={114}>Получить УИН</Button>
                <Button $w={127}>Изменить статус</Button>
                <Spacer />
                <MoreButton />
              </Row>
              <SemiTable />
            </Panel>
            <Splitter />
            <SectionTitle>Готовая продукция</SectionTitle>
            <Row>
              <Button $w={196} $left><WizardIcon />Помощник распределения</Button>
            </Row>
            <ProductTable />
          </Panel>

          <Footer>
            <FooterLabel htmlFor="comment">Комментарий:</FooterLabel>
            <CommentInput id="comment" />
            <Author>
              <PersonIcon />
              <Link href="#" $brown>Администратор</Link>
            </Author>
            <Posted>
              <PostedIcon />
              Проведен
            </Posted>
          </Footer>
        </Work>
      </Main>

      <BatchDialog />
    </Page>
  );
}
